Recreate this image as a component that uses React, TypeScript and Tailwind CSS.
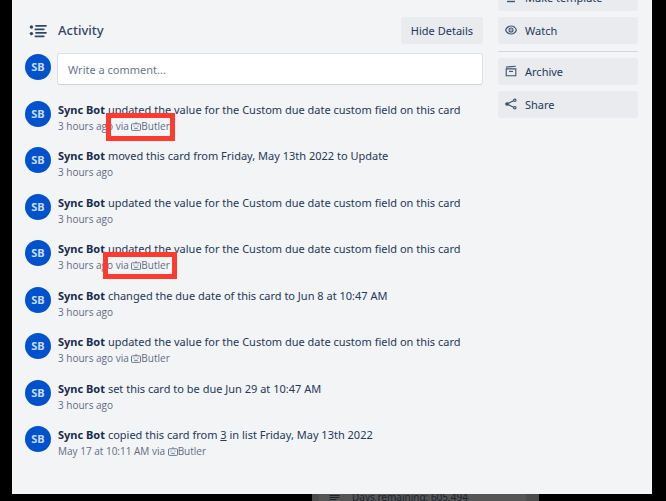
import React from 'react';

const activities = [
  { text: 'updated the value for the Custom due date custom field on this card', time: '3 hours ago', via: true, mark: 'left-[81px] top-3 h-7 w-[69px]' },
  { text: 'moved this card from Friday, May 13th 2022 to Update', time: '3 hours ago' },
  { text: 'updated the value for the Custom due date custom field on this card', time: '3 hours ago' },
  { text: 'updated the value for the Custom due date custom field on this card', time: '3 hours ago', via: true, mark: 'left-[78px] top-3 h-[27px] w-[74px]' },
  { text: 'changed the due date of this card to Jun 8 at 10:47 AM', time: '3 hours ago' },
  { text: 'updated the value for the Custom due date custom field on this card', time: '3 hours ago', via: true },
  { text: 'set this card to be due Jun 29 at 10:47 AM', time: '3 hours ago' },
  {
    text: (
      <>
        copied this card from <a href="#card" className="underline">3</a> in list Friday, May 13th 2022
      </>
    ),
    time: 'May 17 at 10:11 AM',
    via: true,
  },
];

const Avatar = () => (
  <span className="flex size-[26px] shrink-0 items-center justify-center rounded-full bg-[#0052cc] text-[11px] font-bold text-[#c9dcf7]">
    SB
  </span>
);

const ButlerIcon = () => (
  <svg viewBox="0 0 10 9" className="inline-block h-[9px] w-[10px] align-[-1px]" fill="none" stroke="currentColor">
    <rect x="0.5" y="1.8" width="9" height="6.6" rx="0.8" strokeWidth="0.9" />
    <path d="M5 0v1.8" strokeWidth="0.9" />
    <path d="M3 3.6v1.2M7 3.6v1.2M3.2 6.3h3.6" strokeWidth="0.9" />
  </svg>
);

const ListIcon = () => (
  <svg viewBox="0 0 18 14" className="h-[14px] w-[18px]" fill="none" stroke="currentColor" strokeLinecap="round">
    <circle cx="2.4" cy="3" r="1.7" fill="currentColor" stroke="none" />
    <circle cx="2.4" cy="9.6" r="1.7" fill="currentColor" stroke="none" />
    <path d="M7 1.8h10M6.4 5.3h8.4M7 8.8h10M6.4 12.3h8.4" strokeWidth="1.7" />
  </svg>
);

const EyeIcon = () => (
  <svg viewBox="0 0 12 12" className="size-3" fill="none" stroke="currentColor" strokeWidth="1.1">
    <path d="M0.6 6C1.6 3.4 3.6 2 6 2S10.4 3.4 11.4 6C10.4 8.6 8.4 10 6 10S1.6 8.6 0.6 6Z" />
    <circle cx="6" cy="6" r="2" />
    <circle cx="6" cy="6" r="0.7" fill="currentColor" stroke="none" />
  </svg>
);

const ArchiveIcon = () => (
  <svg viewBox="0 0 12 12" className="size-3" fill="none" stroke="currentColor" strokeWidth="1.1">
    <path d="M1 2.1L10.8 1.2" />
    <path d="M1.2 3.9h9.6v6.8H1.2z" />
    <path d="M4 6.4h4" />
  </svg>
);

const ShareIcon = () => (
  <svg viewBox="0 0 12 12" className="size-3" fill="none" stroke="currentColor" strokeWidth="1.2">
    <path d="M3 5.4L8.6 2.8M3 6.6l5.6 2.6" />
    <circle cx="2" cy="6" r="1.2" fill="currentColor" />
    <circle cx="9.8" cy="2.3" r="1.2" />
    <circle cx="9.8" cy="9.7" r="1.2" />
  </svg>
);

const TemplateIcon = () => (
  <svg viewBox="0 0 12 12" className="size-3" fill="none" stroke="currentColor">
    <rect x="2" y="1.5" width="8" height="5" rx="0.6" />
    <path d="M2 10.5h8" strokeWidth="1.4" />
  </svg>
);

const SideButton = ({ icon, label }: { icon: React.ReactNode; label: string }) => (
  <button type="button" className="flex h-[27px] w-full shrink-0 items-center gap-2 rounded-[3px] bg-[#e9ebee] px-[7px] text-left">
    <span className="pb-0.5 text-[#42526e]">{icon}</span>
    <span className="pt-0.5">{label}</span>
  </button>
);

const App = () => {
  return (
    <div className="flex h-screen flex-col overflow-hidden bg-black px-3 font-['Noto_Sans','Open_Sans',sans-serif] text-[11px] text-[#253858]">
      <main className="mr-0.5 flex shrink-0 gap-[15px] overflow-hidden bg-[#f3f4f6] pr-[14px] pb-[21px] pl-[13px]">
        <section className="min-w-0 flex-1 pt-[17px]">
          <div className="flex items-center justify-between">
            <div className="flex items-center gap-[11px] pl-1 text-[#344563]">
              <ListIcon />
              <h2 className="text-[13px] font-medium">Activity</h2>
            </div>
            <button type="button" className="h-[27px] rounded-[3px] bg-[#e9ebee] px-2.5 pt-0.5">
              Hide Details
            </button>
          </div>

          <div className="mt-[9px] flex items-start gap-[6px]">
            <div className="pt-px">
              <Avatar />
            </div>
            <input
              type="text"
              aria-label="Write a comment"
              placeholder="Write a comment..."
              className="h-8 min-w-0 flex-1 rounded-[3px] border border-[#dfe1e6] border-b-[#cdd2dc] bg-white px-2.5 outline-none placeholder:text-[#6b778c]"
            />
          </div>

          <ul className="mt-4">
            {activities.map((item, i) => (
              <li key={i} className="relative flex gap-[7px] odd:h-[46px] even:h-[47px]">
                <Avatar />
                <div className="min-w-0 whitespace-nowrap">
                  <p className="leading-[18px]">
                    <strong className="font-bold text-[#172b4d]">Sync Bot</strong> {item.text}
                  </p>
                  <p className="font-['Open_Sans','Noto_Sans',sans-serif] text-[10px] leading-[15px] text-[#5e6c84]">
                    {item.time}
                    {item.via && (
                      <>
                        {' '}via <ButlerIcon />Butler
                      </>
                    )}
                  </p>
                </div>
                {item.mark && <span className={`absolute border-5 border-[#ff3b30] ${item.mark}`} />}
              </li>
            ))}
          </ul>
        </section>

        <aside className="-mt-4 flex w-[140px] shrink-0 flex-col gap-[6px]">
          <SideButton icon={<TemplateIcon />} label="Make template" />
          <SideButton icon={<EyeIcon />} label="Watch" />
          <hr className="mt-px border-[#d5d8de]" />
          <SideButton icon={<ArchiveIcon />} label="Archive" />
          <SideButton icon={<ShareIcon />} label="Share" />
        </aside>
      </main>

      {/* Board card showing under the dialog */}
      <div className="flex min-h-0 flex-1 justify-center overflow-hidden">
        <div className="ml-[185px] w-[227px] bg-[#4b4b4b] pr-[13px] pl-[7px]">
          <div className="flex gap-3 bg-[#555555] px-2.5 text-[10px] leading-[7px] text-[#1c2330]">
            <svg viewBox="0 0 11 8" className="h-2 w-[11px]" fill="none" stroke="currentColor">
              <path d="M0.5 1.5h10M0.5 3.5h10M0.5 5.5h7" />
            </svg>
            Days remaining: 605.494
          </div>
        </div>
      </div>
    </div>
  );
};

export default App;
